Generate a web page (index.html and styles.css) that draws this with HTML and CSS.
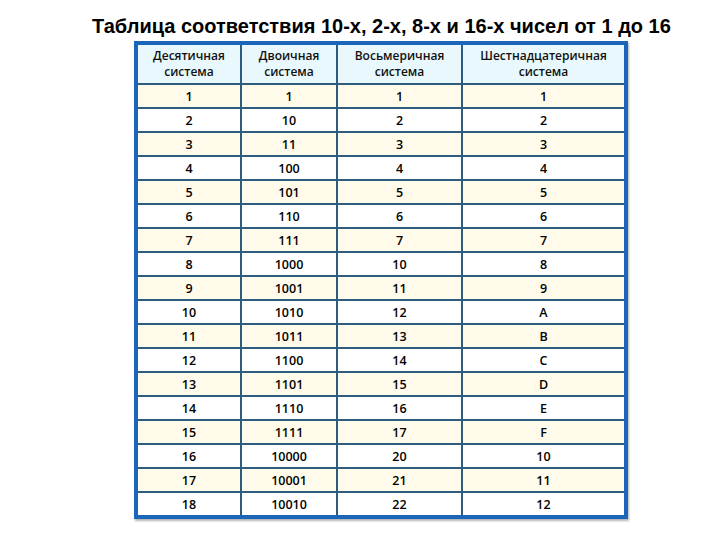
FILE: index.html
```html
<!DOCTYPE html>
<html lang="ru">
<head>
<meta charset="utf-8">
<title>Таблица соответствия</title>
<link rel="stylesheet" href="styles.css">
</head>
<body>
<main class="page">
  <h1 class="title">Таблица соответствия 10-х, 2-х, 8-х и 16-х чисел от 1 до 16</h1>
  <div class="table" role="table">
    <div class="cell head">Десятичная<br>система</div>
    <div class="cell head">Двоичная<br>система</div>
    <div class="cell head">Восьмеричная<br>система</div>
    <div class="cell head">Шестнадцатеричная<br>система</div>

    <div class="cell odd">1</div><div class="cell odd">1</div><div class="cell odd">1</div><div class="cell odd">1</div>
    <div class="cell">2</div><div class="cell">10</div><div class="cell">2</div><div class="cell">2</div>
    <div class="cell odd">3</div><div class="cell odd">11</div><div class="cell odd">3</div><div class="cell odd">3</div>
    <div class="cell">4</div><div class="cell">100</div><div class="cell">4</div><div class="cell">4</div>
    <div class="cell odd">5</div><div class="cell odd">101</div><div class="cell odd">5</div><div class="cell odd">5</div>
    <div class="cell">6</div><div class="cell">110</div><div class="cell">6</div><div class="cell">6</div>
    <div class="cell odd">7</div><div class="cell odd">111</div><div class="cell odd">7</div><div class="cell odd">7</div>
    <div class="cell">8</div><div class="cell">1000</div><div class="cell">10</div><div class="cell">8</div>
    <div class="cell odd">9</div><div class="cell odd">1001</div><div class="cell odd">11</div><div class="cell odd">9</div>
    <div class="cell">10</div><div class="cell">1010</div><div class="cell">12</div><div class="cell">A</div>
    <div class="cell odd">11</div><div class="cell odd">1011</div><div class="cell odd">13</div><div class="cell odd">B</div>
    <div class="cell">12</div><div class="cell">1100</div><div class="cell">14</div><div class="cell">C</div>
    <div class="cell odd">13</div><div class="cell odd">1101</div><div class="cell odd">15</div><div class="cell odd">D</div>
    <div class="cell">14</div><div class="cell">1110</div><div class="cell">16</div><div class="cell">E</div>
    <div class="cell odd">15</div><div class="cell odd">1111</div><div class="cell odd">17</div><div class="cell odd">F</div>
    <div class="cell">16</div><div class="cell">10000</div><div class="cell">20</div><div class="cell">10</div>
    <div class="cell odd">17</div><div class="cell odd">10001</div><div class="cell odd">21</div><div class="cell odd">11</div>
    <div class="cell">18</div><div class="cell">10010</div><div class="cell">22</div><div class="cell">12</div>
  </div>
</main>
</body>
</html>
```

FILE: styles.css
```css
html, body {
  margin: 0;
  padding: 0;
  background: #ffffff;
}

.page {
  width: 720px;
  height: 540px;
  box-sizing: border-box;
  padding: 14px 0 0 92px;
}

.title {
  margin: 0;
  font-family: "Liberation Sans", Arial, sans-serif;
  font-weight: bold;
  font-size: 20px;
  line-height: 24px;
  color: #000;
  white-space: nowrap;
}

.table {
  margin: 3px 0 0 42px;
  width: 486px;
  display: grid;
  grid-template-columns: 102px 94px 123px 161px;
  grid-template-rows: 38px repeat(18, 22px);
  gap: 2px;
  background: #2e5c7e;
  border: 4px solid #1b66b8;
  box-shadow: 1px 2px 2px rgba(0, 0, 0, 0.3);
}

.cell {
  display: flex;
  align-items: center;
  justify-content: center;
  text-align: center;
  background: #ffffff;
  font-family: "Open Sans", "Noto Sans", sans-serif;
  font-size: 12.5px;
  font-weight: 600;
  color: #000;
}

.cell.odd {
  background: #fffaea;
}

.cell.head {
  background: #e8f8fc;
  font-size: 12px;
  line-height: 16px;
  color: #111;
}
```
